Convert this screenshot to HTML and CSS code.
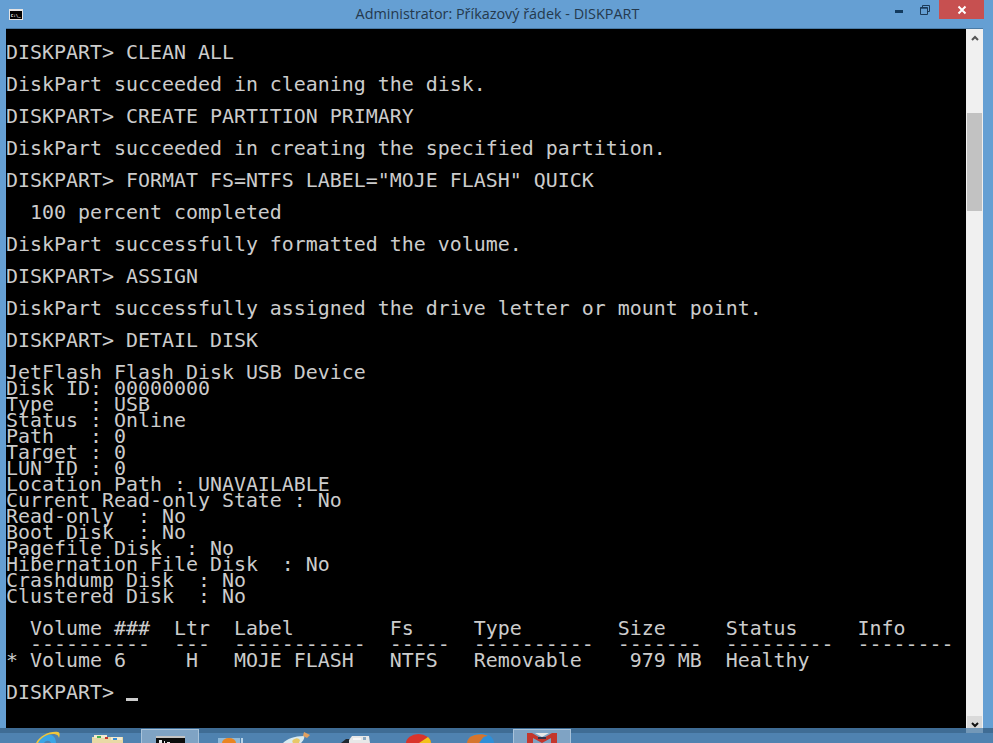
FILE: index.html
```html
<!DOCTYPE html>
<html lang="cs">
<head>
<meta charset="utf-8">
<title>Administrator: Příkazový řádek - DISKPART</title>
<link rel="stylesheet" href="styles.css">
</head>
<body>
<div class="window">
  <header class="titlebar">
    <svg class="app-icon" width="14" height="11" viewBox="0 0 14 11"><rect width="14" height="11" fill="#e4e4e4"/><rect x="1" y="2" width="12" height="8" fill="#000"/><text class="app-icon-text" x="1.700" y="8">C:\_</text></svg>
    <div class="title">Administrator: Příkazový řádek - DISKPART</div>
    <div class="controls">
      <span class="ctl min"></span>
      <svg class="ctl-restore" width="10" height="10" viewBox="0 0 10 10"><path d="M2.5 2.5V.5h7v6h-2M.5 2.5h7v7h-7z" fill="none" stroke="#1c3a57" stroke-width="1"/><path d="M.5 3h7" stroke="#1c3a57" stroke-width="1.4"/></svg>
      <div class="close"><svg width="10" height="10" viewBox="0 0 10 10"><path d="M1.5 1.5l7 7M8.5 1.5l-7 7" stroke="#fff" stroke-width="2"/></svg></div>
    </div>
  </header>
  <div class="client">
    <pre class="console">DISKPART&gt; CLEAN ALL

DiskPart succeeded in cleaning the disk.

DISKPART&gt; CREATE PARTITION PRIMARY

DiskPart succeeded in creating the specified partition.

DISKPART&gt; FORMAT FS=NTFS LABEL="MOJE FLASH" QUICK

  100 percent completed

DiskPart successfully formatted the volume.

DISKPART&gt; ASSIGN

DiskPart successfully assigned the drive letter or mount point.

DISKPART&gt; DETAIL DISK

JetFlash Flash Disk USB Device
Disk ID: 00000000
Type   : USB
Status : Online
Path   : 0
Target : 0
LUN ID : 0
Location Path : UNAVAILABLE
Current Read-only State : No
Read-only  : No
Boot Disk  : No
Pagefile Disk  : No
Hibernation File Disk  : No
Crashdump Disk  : No
Clustered Disk  : No

  Volume ###  Ltr  Label        Fs     Type        Size     Status     Info
  ----------  ---  -----------  -----  ----------  -------  ---------  --------
* Volume 6     H   MOJE FLASH   NTFS   Removable    979 MB  Healthy

DISKPART&gt; <span class="cursor"></span></pre>
    <div class="scrollbar">
      <div class="sb-btn"><svg width="8" height="6" viewBox="0 0 8 6"><path d="M1 5l3-3 3 3" fill="none" stroke="#555" stroke-width="2"/></svg></div>
      <div class="sb-track"><div class="sb-thumb"></div></div>
      <div class="sb-btn sb-btn-down"><svg width="8" height="6" viewBox="0 0 8 6"><path d="M1 1l3 3 3-3" fill="none" stroke="#111" stroke-width="2"/></svg></div>
    </div>
  </div>
</div>
<footer class="taskbar">
  <div class="sb-stub"></div>
  <svg class="tb-icon ie" width="26" height="12" viewBox="0 0 26 12"><path d="M2 12C4 6 10 3 16 4c3 .6 5 4 5 8h-5c-1-3-5-3-7 0z" fill="#3aa5e6"/><path d="M1 12C5 5 14 0 23 1c2 .3 2 3 1 6-.5-2-1-3-3-3.600C15 2 7 5 3 12z" fill="#f0c63a"/></svg>
  <svg class="tb-icon folder" width="31" height="8" viewBox="0 0 31 8"><rect x="0" y="2" width="31" height="6" fill="#e9d9a6"/><rect x="2" y="0" width="13" height="3" fill="#f3ead0"/><rect x="19" y="2" width="11" height="3" fill="#f3ead0"/><rect x="5" y="1" width="4" height="2" fill="#49b04f"/><rect x="13" y="2" width="3" height="2" fill="#c83a30"/><rect x="21" y="3" width="4" height="2" fill="#3a8fd8"/></svg>
  <div class="tb-active tb-cmd"><svg width="29" height="7" viewBox="0 0 29 7"><rect width="29" height="7" fill="#0c0c0c"/><rect width="29" height="2" fill="#c4c4c4"/><rect x="3" y="4" width="3" height="3" fill="#e8e8e8"/><rect x="8" y="5" width="1" height="2" fill="#e8e8e8"/><rect x="11" y="6" width="3" height="1" fill="#e8e8e8"/></svg></div>
  <svg class="tb-icon media" width="25" height="5" viewBox="0 0 25 5"><rect x="0" y="0" width="22" height="5" fill="#8fb9d9"/><rect x="23" y="0" width="2" height="5" fill="#b8d4e8"/><path d="M4 5a7 5 0 0 1 14 0z" fill="#ea8420"/></svg>
  <svg class="tb-icon rocket" width="28" height="11" viewBox="0 0 28 11"><path d="M0 11C4 7 11 4 21 4c1 2-1 5-3 7z" fill="#d8eaf0"/><path d="M10 11a4 3 0 0 1 7-3l-1 3z" fill="#e8c868"/><path d="M20 4l1-4 6 3-3 3z" fill="#e0a060"/></svg>
  <svg class="tb-icon page" width="30" height="8" viewBox="0 0 30 8"><path d="M0 8l5-4h6v4z" fill="#202830"/><path d="M8 8V5l3-4h17l1 7z" fill="#e8e8e8"/><path d="M12 3h8v2h-8z" fill="#f8f8f8"/><rect x="22" y="2" width="3" height="3" fill="#8aaac4"/></svg>
  <svg class="tb-icon chrome" width="25" height="9" viewBox="0 0 25 9"><path d="M0 9a12.500 9 0 0 1 25 0z" fill="#d9342b"/><path d="M13 9h12a12 9 0 0 0-3-6z" fill="#f2c21b"/></svg>
  <svg class="tb-icon firefox" width="28" height="10" viewBox="0 0 28 10"><path d="M1 10a13.500 10 0 0 1 27 0z" fill="#2f8fd8"/><path d="M4 4C8 1 17 0 22 3c-3 0-5 1-6 3l-3 4H1c0-2 1-4 3-6z" fill="#e8721c" opacity=".9"/></svg>
  <div class="tb-active tb-gmail"><svg width="30" height="10" viewBox="0 0 30 10"><path d="M0 0h5l10 6 10-6h5v10h-6V5l-9 5-9-5v5H0z" fill="#c4362c"/><path d="M8 0h14l-7 4z" fill="#e8e8e8"/><path d="M11 4h8v2h-8z" fill="#33334a"/></svg></div>
</footer>
</body>
</html>
```
FILE: styles.css
```css
html, body {
  margin: 0;
  padding: 0;
  width: 993px;
  height: 743px;
  overflow: hidden;
  background: #659fd3;
}
.window {
  height: 728px;
  display: flex;
  flex-direction: column;
  background: #659fd3;
  padding: 0 10px 0 6px;
  box-sizing: border-box;
}
.titlebar {
  height: 29px;
  flex: none;
  display: flex;
  position: relative;
  margin: 0 -10px 0 -6px;
  padding: 0 9px;
}
.app-icon {
  margin-top: 9px;
  flex: none;
}
.app-icon-text {
  font: bold 4.200px "DejaVu Sans Mono", monospace;
  fill: #fff;
}
.title {
  position: absolute;
  left: 2px;
  right: 0;
  top: 4px;
  text-align: center;
  font: 14.4px/20px "Open Sans", "Noto Sans", sans-serif;
  color: #24394d;
}
.controls {
  margin-left: auto;
  display: flex;
  align-items: flex-start;
  position: relative;
}
.ctl.min {
  width: 8px;
  height: 3px;
  background: #123a5e;
  margin: 10px 0 0 0;
}
.ctl-restore {
  margin: 5px 0 0 17px;
}
.close {
  width: 45px;
  height: 19px;
  margin-left: 9px;
  background: #c75050;
  display: flex;
  align-items: center;
  justify-content: center;
}
.client {
  flex: 1;
  min-height: 0;
  display: flex;
  background: #000;
  box-shadow: 0 -1px 0 #4a7ba6;
}
.console {
  flex: 1;
  margin: 0;
  padding: 16px 0 0 0;
  font-family: "DejaVu Sans Mono", monospace;
  font-size: 19.93px;
  line-height: 16px;
  color: #cccccc;
  white-space: pre;
  overflow: hidden;
}
.cursor {
  display: inline-block;
  width: 12px;
  height: 3px;
  background: #cccccc;
  vertical-align: -2px;
}
.scrollbar {
  width: 17px;
  flex: none;
  display: flex;
  flex-direction: column;
  background: #f0f0f0;
}
.sb-btn {
  height: 17px;
  flex: none;
  display: flex;
  align-items: center;
  justify-content: center;
}
.sb-btn-down {
  height: 12px;
  align-items: flex-end;
  background: #dadada;
  margin: 0 1px;
}
.sb-track {
  flex: 1;
  padding-top: 67px;
}
.sb-thumb {
  height: 98px;
  margin: 0 1px;
  background: #c2c2c2;
}
.taskbar {
  height: 15px;
  background: linear-gradient(#3f6c94 0 5px, #4f82b0 5px);
  position: relative;
  overflow: hidden;
}
.sb-stub {
  position: absolute;
  left: 966px;
  top: 0;
  width: 17px;
  height: 5px;
  background: #7398b8;
}
.tb-icon {
  position: absolute;
  bottom: 0;
}
.ie { left: 35px; }
.folder { left: 92px; }
.media { left: 218px; }
.rocket { left: 283px; }
.page { left: 341px; }
.chrome { left: 406px; }
.firefox { left: 466px; }
.tb-active {
  position: absolute;
  top: 1px;
  bottom: 0;
  width: 58px;
  background: #7fa3c4;
  border: 1px solid #a9c3da;
  border-bottom: 0;
  box-sizing: border-box;
  display: flex;
  justify-content: center;
  align-items: flex-end;
}
.tb-cmd { left: 141px; }
.tb-gmail { left: 513px; }
```
